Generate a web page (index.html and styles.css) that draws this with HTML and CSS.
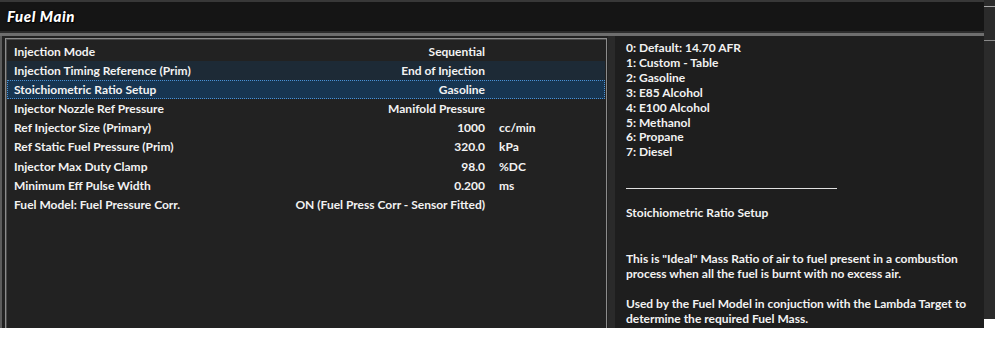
FILE: index.html
```html
<!DOCTYPE html>
<html lang="en">
<head>
    <meta charset="UTF-8">
    <title>Fuel Main</title>
    <link rel="stylesheet" href="styles.css">
</head>
<body>
    <div class="window">
        <div class="titlebar">
            <span class="title">Fuel Main</span>
        </div>

        <div class="content">
            <div class="list-pane">
                <div class="list">
                    <div class="row">
                        <span class="label">Injection Mode</span>
                        <span class="value">Sequential</span>
                        <span class="unit"></span>
                    </div>
                    <div class="row hover">
                        <span class="label">Injection Timing Reference (Prim)</span>
                        <span class="value">End of Injection</span>
                        <span class="unit"></span>
                    </div>
                    <div class="row selected">
                        <span class="label">Stoichiometric Ratio Setup</span>
                        <span class="value">Gasoline</span>
                        <span class="unit"></span>
                    </div>
                    <div class="row">
                        <span class="label">Injector Nozzle Ref Pressure</span>
                        <span class="value">Manifold Pressure</span>
                        <span class="unit"></span>
                    </div>
                    <div class="row">
                        <span class="label">Ref Injector Size (Primary)</span>
                        <span class="value">1000</span>
                        <span class="unit">cc/min</span>
                    </div>
                    <div class="row">
                        <span class="label">Ref Static Fuel Pressure (Prim)</span>
                        <span class="value">320.0</span>
                        <span class="unit">kPa</span>
                    </div>
                    <div class="row">
                        <span class="label">Injector Max Duty Clamp</span>
                        <span class="value">98.0</span>
                        <span class="unit">%DC</span>
                    </div>
                    <div class="row">
                        <span class="label">Minimum Eff Pulse Width</span>
                        <span class="value">0.200</span>
                        <span class="unit">ms</span>
                    </div>
                    <div class="row">
                        <span class="label">Fuel Model: Fuel Pressure Corr.</span>
                        <span class="value">ON (Fuel Press Corr - Sensor Fitted)</span>
                        <span class="unit"></span>
                    </div>
                </div>
            </div>

            <div class="help-pane">
                <div class="options">
                    <div>0: Default: 14.70 AFR</div>
                    <div>1: Custom - Table</div>
                    <div>2: Gasoline</div>
                    <div>3: E85 Alcohol</div>
                    <div>4: E100 Alcohol</div>
                    <div>5: Methanol</div>
                    <div>6: Propane</div>
                    <div>7: Diesel</div>
                </div>
                <div class="rule"></div>
                <div class="help-title">Stoichiometric Ratio Setup</div>
                <p>This is "Ideal" Mass Ratio of air to fuel present in a combustion process when all the fuel is burnt with no excess air.</p>
                <p class="second">Used by the Fuel Model in conjuction with the Lambda Target to determine the required Fuel Mass.</p>
            </div>
        </div>
    </div>

    <div class="side-strip"></div>
</body>
</html>
```

FILE: styles.css
```css
* {
    box-sizing: border-box;
}

body {
    margin: 0;
    background-color: #ffffff;
    display: flex;
    align-items: flex-start;
    font-family: Lato, "Open Sans", sans-serif;
    font-weight: 700;
    font-size: 12px;
    color: #f2f2f2;
}

.window {
    width: 984px;
    height: 328px;
    background-color: #222222;
    display: flex;
    flex-direction: column;
    overflow: hidden;
}

.titlebar {
    height: 36px;
    background-color: #151515;
    border-top: 2px solid #383838;
    border-bottom: 3px solid #6e6e6e;
    box-shadow: inset 0 -2px 0 #2c2c2c;
    padding: 5px 0 0 7px;
}

.title {
    font-size: 15px;
    font-weight: 900;
    font-style: italic;
    letter-spacing: 0.6px;
    color: #ffffff;
    text-shadow: 0 0 2px #000000, 1px 1px 1px #000000;
}

.content {
    flex: 1;
    display: flex;
    min-height: 0;
}

.list-pane {
    width: 608px;
    border-left: 2px solid #5c5c5c;
    padding: 2px 1px 0 3px;
}

.list {
    height: 100%;
    border: 1px solid #8c8c8c;
    border-bottom: none;
    box-shadow: inset 1px 1px 0 #4a4a4a;
    padding: 3px 1px 0 1px;
}

.row {
    display: flex;
    height: 19.1px;
    line-height: 17px;
    padding-left: 6px;
    border: 1px solid transparent;
}

.row .label {
    flex: 1;
    white-space: nowrap;
}

.row .value {
    text-align: right;
    white-space: nowrap;
}

.row .unit {
    width: 119px;
    padding-left: 14px;
    white-space: nowrap;
}

.row.hover {
    background-color: #1d2a36;
}

.row.selected {
    background-color: #173551;
    border: 1px dotted #4a90d4;
}

.help-pane {
    flex: 1;
    background-color: #1e1e1e;
    border-left: 7px solid #2a2a2a;
    padding: 5px 0 0 11px;
    line-height: 14.9px;
}

.rule {
    width: 211px;
    height: 1px;
    background-color: #e0e0e0;
    margin-top: 28px;
}

.help-title {
    margin-top: 17px;
}

p {
    margin: 30px 0 0 0;
    width: 352px;
    line-height: 15px;
}

p.second {
    margin-top: 15px;
}

.side-strip {
    width: 11px;
    height: 319px;
    background-color: #2b2b2b;
    background-image: linear-gradient(#a8a8a8, #a8a8a8), linear-gradient(#8a8a8a, #8a8a8a);
    background-size: 100% 1px, 100% 1px;
    background-position: 0 6px, 0 40px;
    background-repeat: no-repeat;
}
```
